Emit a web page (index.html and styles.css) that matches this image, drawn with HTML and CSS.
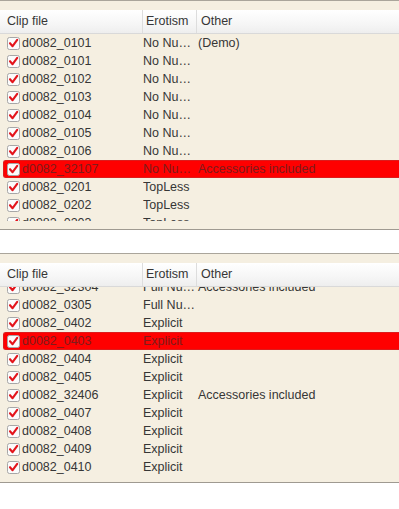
FILE: index.html
```html
<!DOCTYPE html>
<html lang="en">
<head>
    <meta charset="UTF-8">
    <title>Clip files</title>
    <link rel="stylesheet" href="styles.css">
</head>
<body>
    <svg width="0" height="0" class="defs">
        <defs>
            <symbol id="chk" viewBox="0 0 13 13">
                <rect x="0.5" y="0.5" width="12" height="12" rx="2" fill="#fbfbfb" stroke="#a7a7a7"/>
                <path d="M3 6.2 L5.6 9.2 L10.2 2.8" fill="none" stroke="#e3141b" stroke-width="2.1" stroke-linecap="round" stroke-linejoin="round"/>
            </symbol>
        </defs>
    </svg>

    <!-- First list -->
    <div class="panel">
        <div class="head">
            <div class="hcell c1">Clip file</div>
            <div class="hcell c2">Erotism</div>
            <div class="hcell c3">Other</div>
        </div>
        <div class="list">
            <div class="rows">
                <div class="row"><span class="c1"><svg class="box"><use href="#chk"/></svg>d0082_0101</span><span class="c2">No Nudity</span><span class="c3">(Demo)</span></div>
                <div class="row"><span class="c1"><svg class="box"><use href="#chk"/></svg>d0082_0101</span><span class="c2">No Nudity</span><span class="c3"></span></div>
                <div class="row"><span class="c1"><svg class="box"><use href="#chk"/></svg>d0082_0102</span><span class="c2">No Nudity</span><span class="c3"></span></div>
                <div class="row"><span class="c1"><svg class="box"><use href="#chk"/></svg>d0082_0103</span><span class="c2">No Nudity</span><span class="c3"></span></div>
                <div class="row"><span class="c1"><svg class="box"><use href="#chk"/></svg>d0082_0104</span><span class="c2">No Nudity</span><span class="c3"></span></div>
                <div class="row"><span class="c1"><svg class="box"><use href="#chk"/></svg>d0082_0105</span><span class="c2">No Nudity</span><span class="c3"></span></div>
                <div class="row"><span class="c1"><svg class="box"><use href="#chk"/></svg>d0082_0106</span><span class="c2">No Nudity</span><span class="c3"></span></div>
                <div class="row selected"><span class="c1"><svg class="box"><use href="#chk"/></svg>d0082_32107</span><span class="c2">No Nudity</span><span class="c3">Accessories included</span></div>
                <div class="row"><span class="c1"><svg class="box"><use href="#chk"/></svg>d0082_0201</span><span class="c2">TopLess</span><span class="c3"></span></div>
                <div class="row"><span class="c1"><svg class="box"><use href="#chk"/></svg>d0082_0202</span><span class="c2">TopLess</span><span class="c3"></span></div>
                <div class="row"><span class="c1"><svg class="box"><use href="#chk"/></svg>d0082_0203</span><span class="c2">TopLess</span><span class="c3"></span></div>
            </div>
        </div>
    </div>

    <!-- Second list, scrolled down -->
    <div class="panel">
        <div class="head">
            <div class="hcell c1">Clip file</div>
            <div class="hcell c2">Erotism</div>
            <div class="hcell c3">Other</div>
        </div>
        <div class="list">
            <div class="rows scrolled">
                <div class="row"><span class="c1"><svg class="box"><use href="#chk"/></svg>d0082_32304</span><span class="c2">Full Nudity</span><span class="c3">Accessories included</span></div>
                <div class="row"><span class="c1"><svg class="box"><use href="#chk"/></svg>d0082_0305</span><span class="c2">Full Nudity</span><span class="c3"></span></div>
                <div class="row"><span class="c1"><svg class="box"><use href="#chk"/></svg>d0082_0402</span><span class="c2">Explicit</span><span class="c3"></span></div>
                <div class="row selected"><span class="c1"><svg class="box"><use href="#chk"/></svg>d0082_0403</span><span class="c2">Explicit</span><span class="c3"></span></div>
                <div class="row"><span class="c1"><svg class="box"><use href="#chk"/></svg>d0082_0404</span><span class="c2">Explicit</span><span class="c3"></span></div>
                <div class="row"><span class="c1"><svg class="box"><use href="#chk"/></svg>d0082_0405</span><span class="c2">Explicit</span><span class="c3"></span></div>
                <div class="row"><span class="c1"><svg class="box"><use href="#chk"/></svg>d0082_32406</span><span class="c2">Explicit</span><span class="c3">Accessories included</span></div>
                <div class="row"><span class="c1"><svg class="box"><use href="#chk"/></svg>d0082_0407</span><span class="c2">Explicit</span><span class="c3"></span></div>
                <div class="row"><span class="c1"><svg class="box"><use href="#chk"/></svg>d0082_0408</span><span class="c2">Explicit</span><span class="c3"></span></div>
                <div class="row"><span class="c1"><svg class="box"><use href="#chk"/></svg>d0082_0409</span><span class="c2">Explicit</span><span class="c3"></span></div>
                <div class="row"><span class="c1"><svg class="box"><use href="#chk"/></svg>d0082_0410</span><span class="c2">Explicit</span><span class="c3"></span></div>
            </div>
        </div>
    </div>
</body>
</html>
```

FILE: styles.css
```css
body {
    margin: 0;
    padding: 0;
    background: #fff;
    font-family: "Liberation Sans", Arial, sans-serif;
    font-size: 12.5px;
    color: #363636;
}

.defs {
    position: absolute;
}

.panel {
    background: #f5efe1;
    border-top: 1px solid #aaa59b;
    border-bottom: 1px solid #9f9a91;
    padding: 9px 0 8px;
    margin-bottom: 23px;
}

/* Column header */
.head {
    display: flex;
    height: 23px;
    background: linear-gradient(#ffffff, #f6f6f6 60%, #eeeeee);
    border-bottom: 1px solid #d9d9d9;
}

.hcell {
    line-height: 23px;
    padding-left: 7px;
    box-sizing: border-box;
    white-space: nowrap;
}

.hcell.c1 {
    width: 143px;
    border-right: 1px solid #dddddd;
}

.hcell.c2 {
    width: 54px;
    padding-left: 3px;
    border-right: 1px solid #dddddd;
}

.hcell.c3 {
    padding-left: 4px;
}

/* Rows */
.list {
    height: 187px;
    overflow: hidden;
}

.rows.scrolled {
    margin-top: -9px;
}

.row {
    display: flex;
    height: 18px;
    line-height: 18px;
    white-space: nowrap;
}

.row .c1 {
    display: flex;
    align-items: center;
    width: 143px;
    padding-left: 7px;
    box-sizing: border-box;
}

.box {
    width: 13px;
    height: 13px;
    margin-right: 2px;
    flex-shrink: 0;
}

.row .c2 {
    width: 54px;
    overflow: hidden;
    text-overflow: ellipsis;
}

.row .c3 {
    padding-left: 1px;
}

.row.selected {
    background: #ff0000;
    color: #7e1c1c;
    margin-left: 3px;
    border: 1px solid #dc1c1c;
    border-right: none;
    border-radius: 3px 0 0 3px;
    height: 16px;
    line-height: 16px;
}

.row.selected .c1 {
    width: 139px;
    padding-left: 3px;
}
```
